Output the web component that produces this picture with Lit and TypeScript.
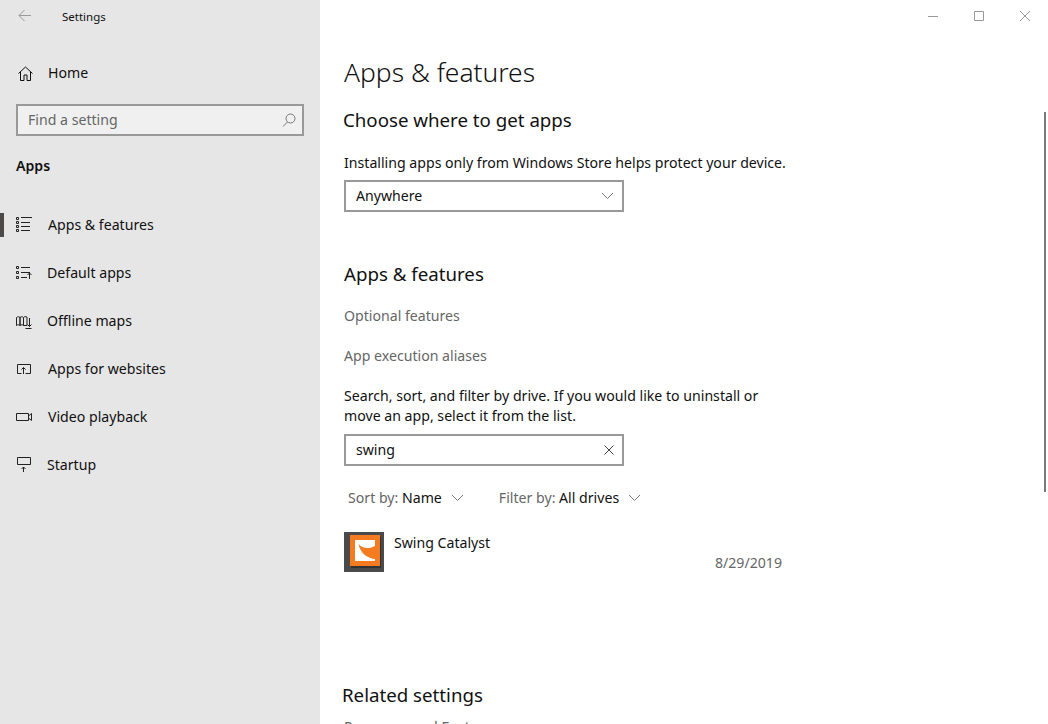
import { LitElement, html, svg, css } from 'lit';
import { customElement } from 'lit/decorators.js';

const bullet = (y: number) => `M.5 ${y}h2v2h-2z`;

const ICONS = {
  list: svg`<path d="${bullet(1.5)}${bullet(5.5)}${bullet(9.5)}${bullet(13.5)}M5 1.500h11M5 6.500h9M5 10.500h9M5 14.500h9"/>`,
  defaults: svg`<path d="${bullet(2.5)}${bullet(7.5)}${bullet(12.5)}M5 3.500h9M5 8.500h9M5 13.500h6M13.500 15V9M11.500 11l2-2 2 2"/>`,
  map: svg`<path d="M.5 5.500c1.500-1 2.500-1 3.500 0v8c-1-1-2-1-3.500 0zM4 5.500c1.500-1 2.500-1 3.500 0v8c-1-1-2-1-3.500 0zM7.500 5.500c1-1 2-1 3.500-.5v8.500H7.500M13.500 6v8.500M11.500 12.500l2 2 2-2M9.500 16.500h6"/>`,
  web: svg`<path d="M5.500 13.500h-4v-9h13v9h-5M7.500 14V7.500M5.500 9.500l2-2 2 2"/>`,
  video: svg`<path d="M.5 5.500h12v7H.5zM12.500 8l3-2.500v7l-3-2.500"/>`,
  startup: svg`<path d="M1.500 1.500h13v7h-13zM7.500 16v-5M5.500 13l2-2 2 2"/>`,
};

const NAV = [
  { label: 'Apps & features', icon: ICONS.list, active: true, shift: false },
  { label: 'Default apps', icon: ICONS.defaults, active: false, shift: true },
  { label: 'Offline maps', icon: ICONS.map, active: false, shift: true },
  { label: 'Apps for websites', icon: ICONS.web, active: false, shift: false },
  { label: 'Video playback', icon: ICONS.video, active: false, shift: false },
  { label: 'Startup', icon: ICONS.startup, active: false, shift: true },
];

const chevron = html`<svg class="chev" width="13" height="8" viewBox="0 0 13 8"><path d="M1 1l5.500 5.500L12 1"/></svg>`;

@customElement('app-root')
export class AppRoot extends LitElement {
  static styles = css`
    :host {
      display: flex;
      position: relative;
      height: 724px;
      overflow: hidden;
      background: white;
      color: #111;
      font-family: 'Noto Sans', 'Open Sans', sans-serif;
      font-size: 14.14px;
      line-height: 20px;
    }

    svg { display: block; fill: none; stroke: currentColor; stroke-width: 1; }

    /* sidebar */
    .side {
      box-sizing: border-box;
      flex: 0 0 320px;
      background: #e6e6e6;
    }

    .titlebar {
      display: flex;
      align-items: center;
      height: 33px;
      padding-left: 18px;
      font-size: 11.500px;
    }

    .back { color: #999; margin: -2px 31px 0 0; }

    .home {
      display: flex;
      align-items: center;
      height: 48px;
      margin-top: 16px;
      padding-left: 18px;
      gap: 15px;
    }

    .find {
      box-sizing: border-box;
      display: flex;
      align-items: center;
      justify-content: space-between;
      height: 32px;
      margin: 7px 16px 0;
      padding: 0 6px 0 10px;
      border: 2px solid #999;
      background: #f0f0f0;
      color: #666;
    }

    .find svg { color: #777; }

    .group {
      height: 20px;
      margin: 20px 0 19px 16px;
      font-weight: 600;
    }

    .nav { display: flex; flex-direction: column; padding-top: 6px; }

    .row {
      display: flex;
      align-items: center;
      position: relative;
      height: 48px;
      padding-left: 16px;
    }

    .row .glyph { width: 32px; flex: none; color: #222; }
    .row.shift .glyph { width: 31px; }

    .row.active::before {
      content: '';
      position: absolute;
      left: 0;
      top: 12px;
      width: 4px;
      height: 24px;
      background: #4c4a48;
    }

    /* content */
    .main {
      flex: 1;
      padding: 0 0 0 24px;
      min-width: 0;
    }

    .controls {
      display: flex;
      justify-content: flex-end;
      align-items: center;
      gap: 36px;
      height: 32px;
      padding-right: 18px;
      color: #999;
    }

    h1, h2 { margin: 0; font-weight: 400; }

    h1 {
      font-size: 26.400px;
      line-height: 36px;
      margin-top: 22px;
      font-weight: 300;
      color: #111;
    }

    h2 { font-size: 18.700px; line-height: 28px; }

    .where { margin: 16px 0 0 -1px; }
    .lead { margin: 19px 0 7px; }

    .box {
      box-sizing: border-box;
      display: flex;
      align-items: center;
      justify-content: space-between;
      width: 280px;
      height: 32px;
      padding: 0 8px 0 10px;
      border: 2px solid #999;
      background: white;
    }

    .chev { color: #777; }

    .features { margin-top: 48px; }

    .link { color: #666; height: 20px; }
    .first { margin-top: 18px; }
    .second { margin-top: 20px; }

    .hint { width: 440px; margin: 20px 0 8px; }

    .filters {
      display: flex;
      height: 20px;
      margin-top: 22px;
      padding-left: 4px;
    }

    .filter { display: flex; align-items: center; gap: 9px; margin-right: 35px; }
    .filter span span { color: #666; }

    .app {
      display: flex;
      width: 438px;
      height: 40px;
      margin-top: 24px;
    }

    .logo { width: 40px; height: 40px; flex: none; stroke: none; }
    .app-name { margin: 1px 0 0 10px; flex: 1; }
    .app-date { align-self: flex-end; color: #666; margin-bottom: -1px; }

    .related { margin: 109px 0 0 -2px; }
    .cut { margin-top: 8px; color: #666; }

    .scroll {
      position: absolute;
      right: 2px;
      top: 112px;
      width: 2px;
      height: 380px;
      background: #7a7a7a;
    }
  `;

  render() {
    return html`
      <div class="side">
        <div class="titlebar">
          <svg class="back" width="13" height="13" viewBox="0 0 13 13"><path d="M13 6.500H1M6.500 1L1 6.500 6.500 12"/></svg>
          Settings
        </div>
        <div class="home">
          <svg width="15" height="15" viewBox="0 0 15 15"><path d="M0.500 7.500L7.500 1l7 6.500M2.500 6v8.500h3.500V9h3v5.500h3.500V6"/></svg>
          Home
        </div>
        <div class="find">
          Find a setting
          <svg width="14" height="14" viewBox="0 0 14 14"><circle cx="8.500" cy="5.500" r="4.500"/><path d="M5.500 9L1 13.500"/></svg>
        </div>
        <div class="group">Apps</div>
        <div class="nav">
          ${NAV.map((item) => html`
            <div class="row ${item.active ? 'active' : ''} ${item.shift ? 'shift' : ''}">
              <div class="glyph"><svg width="20" height="18" viewBox="0 0 20 18">${item.icon}</svg></div>
              ${item.label}
            </div>
          `)}
        </div>
      </div>

      <div class="main">
        <div class="controls">
          <svg width="10" height="10" viewBox="0 0 10 10"><path d="M0 5.500h10"/></svg>
          <svg width="10" height="10" viewBox="0 0 10 10"><path d="M.5.500h9v9h-9z"/></svg>
          <svg width="10" height="10" viewBox="0 0 10 10"><path d="M0 0l10 10M10 0L0 10"/></svg>
        </div>
        <h1>Apps &amp; features</h1>
        <h2 class="where">Choose where to get apps</h2>
        <div class="lead">Installing apps only from Windows Store helps protect your device.</div>
        <div class="box">Anywhere ${chevron}</div>

        <h2 class="features">Apps &amp; features</h2>
        <div class="link first">Optional features</div>
        <div class="link second">App execution aliases</div>
        <div class="hint">Search, sort, and filter by drive. If you would like to uninstall or move an app, select it from the list.</div>
        <div class="box">
          swing
          <svg width="10" height="10" viewBox="0 0 10 10" style="color:#444"><path d="M.5.500l9 9M9.500.500l-9 9"/></svg>
        </div>
        <div class="filters">
          <div class="filter"><span><span>Sort by:</span> Name</span> ${chevron}</div>
          <div class="filter"><span><span>Filter by:</span> All drives</span> ${chevron}</div>
        </div>
        <div class="app">
          <svg class="logo" viewBox="0 0 40 40">
            <rect width="40" height="40" fill="#4a4a4a"/>
            <rect x="7" y="5" width="30" height="31" fill="#333"/>
            <rect x="6" y="3" width="30" height="31" fill="#f47b20"/>
            <path d="M11 8h20v21H11z" fill="#fff"/>
            <path d="M14.500 12C18 17 26 17 31 14V27C22 26 16 20 14.500 12z" fill="#f47b20"/>
          </svg>
          <div class="app-name">Swing Catalyst</div>
          <div class="app-date">8/29/2019</div>
        </div>
        <h2 class="related">Related settings</h2>
        <div class="cut">Programs and Features</div>
      </div>
      <div class="scroll"></div>
    `;
  }
}
